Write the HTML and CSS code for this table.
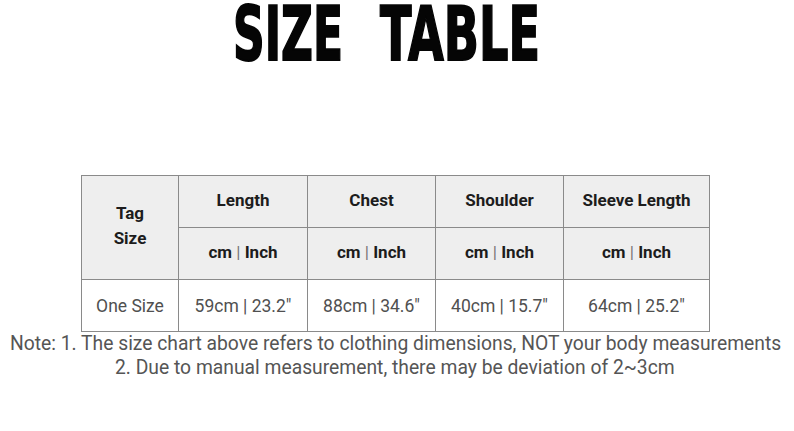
FILE: index.html
```html
<!DOCTYPE html>
<html>
<head>
<meta charset="utf-8">
<link rel="stylesheet" href="styles.css">
</head>
<body>
<div class="page">
  <h1 class="title">
    <svg class="title-svg" width="794" height="70" viewBox="0 0 794 70">
      <text x="233" y="60" textLength="110" lengthAdjust="spacingAndGlyphs">SIZE</text>
      <text x="380" y="60" textLength="160" lengthAdjust="spacingAndGlyphs">TABLE</text>
    </svg>
  </h1>
  <table class="size-table">
    <colgroup>
      <col class="c1"><col class="c2"><col class="c3"><col class="c4"><col class="c5">
    </colgroup>
    <tr class="head">
      <th rowspan="2" class="tag">Tag<br>Size</th>
      <th>Length</th>
      <th>Chest</th>
      <th>Shoulder</th>
      <th>Sleeve Length</th>
    </tr>
    <tr class="head">
      <th>cm <span class="sep">|</span> Inch</th>
      <th>cm <span class="sep">|</span> Inch</th>
      <th>cm <span class="sep">|</span> Inch</th>
      <th>cm <span class="sep">|</span> Inch</th>
    </tr>
    <tr class="data">
      <td>One Size</td>
      <td>59cm | 23.2"</td>
      <td>88cm | 34.6"</td>
      <td>40cm | 15.7"</td>
      <td>64cm | 25.2"</td>
    </tr>
  </table>
  <div class="notes">
    <p class="note1">Note: 1. The size chart above refers to clothing dimensions, NOT your body measurements</p>
    <p class="note2">2. Due to manual measurement, there may be deviation of 2~3cm</p>
  </div>
</div>
</body>
</html>
```
FILE: styles.css
```css
html, body {
  margin: 0;
  padding: 0;
  background: #ffffff;
}
.page {
  width: 794px;
  height: 431px;
  overflow: hidden;
  font-family: Roboto, "Liberation Sans", sans-serif;
}
.title {
  margin: 0;
  height: 175px;
  display: block;
}
.title-svg {
  display: block;
}
.title-svg text {
  font-family: "DejaVu Sans", sans-serif;
  font-weight: 700;
  font-size: 75px;
  fill: #050505;
  stroke: #050505;
  stroke-width: 2px;
}
.size-table {
  margin-left: 81px;
  border-collapse: collapse;
  table-layout: fixed;
  width: 628px;
  border: 1.5px solid #666666;
}
.c1 { width: 97px; }
.c2 { width: 129px; }
.c3 { width: 128px; }
.c4 { width: 128px; }
.c5 { width: 146px; }
.size-table th, .size-table td {
  border: 1px solid #8a8a8a;
  height: 51px;
  padding: 0;
  text-align: center;
  vertical-align: middle;
  font-size: 17px;
}
.head th {
  background: #eeeeee;
  color: #1c1c1c;
  font-weight: 700;
  height: 48px;
  padding-bottom: 3px;
}
.tag {
  line-height: 25px;
}
.sep {
  color: #777;
  font-weight: 400;
}
.data td {
  background: #ffffff;
  color: #505050;
  font-weight: 400;
  font-size: 17.5px;
}
.notes {
  color: #555555;
  font-size: 19.3px;
  line-height: 24px;
}
.notes p {
  margin: 0;
  white-space: nowrap;
}
.note1 {
  padding-left: 10px;
  margin-top: 1px;
}
.note2 {
  padding-left: 115px;
}
```
